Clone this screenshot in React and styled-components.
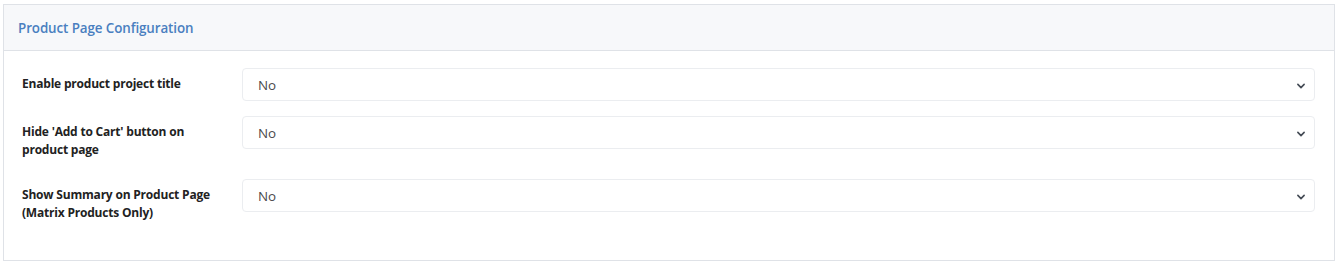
import React from "react";
import styled, { createGlobalStyle } from "styled-components";

const Global = createGlobalStyle`
  html, body { margin: 0; padding: 0; background: #ffffff; }
  body { font-family: "Open Sans", "Noto Sans", sans-serif; }
`;

const Page = styled.div`
  padding: 4px 5px 6px 3px;
`;

const Card = styled.section`
  border: 1px solid #dfe2e7;
  background: #ffffff;
`;

const Header = styled.header`
  height: 46px;
  box-sizing: border-box;
  display: flex;
  align-items: center;
  padding: 0 14px;
  background: #f7f8fa;
  border-bottom: 1px solid #dfe2e7;
`;

const Title = styled.h3`
  margin: 0;
  font-size: 13.4px;
  font-weight: 600;
  color: #4a7fc0;
  letter-spacing: -0.1px;
`;

const Body = styled.div`
  padding: 17px 19px 33px 18px;
  display: flex;
  flex-direction: column;
  gap: 15px;
`;

const Row = styled.div`
  display: grid;
  grid-template-columns: 220px 1fr;
  align-items: start;
`;

const Label = styled.label`
  padding: 7px 24px 5px 0;
  font-size: 12px;
  line-height: 18px;
  font-weight: 700;
  color: #222;
  letter-spacing: -0.2px;
`;

const SelectWrap = styled.div`
  position: relative;
`;

const Select = styled.select`
  width: 100%;
  height: 33px;
  appearance: none;
  -webkit-appearance: none;
  border: 1px solid #ebedf0;
  border-radius: 4px;
  background: #ffffff;
  padding: 0 30px 0 15px;
  font-family: "Open Sans", "Noto Sans", sans-serif;
  font-size: 13.4px;
  color: #4a4a4a;
  outline: none;
`;

const Chevron = styled.svg`
  position: absolute;
  right: 9px;
  top: 50%;
  width: 10px;
  height: 10px;
  margin-top: -4px;
  pointer-events: none;
`;

const fields = [
  "Enable product project title",
  "Hide 'Add to Cart' button on product page",
  "Show Summary on Product Page (Matrix Products Only)",
];

export default function App() {
  return (
    <Page>
      <Global />
      <Card>
        <Header>
          <Title>Product Page Configuration</Title>
        </Header>
        <Body>
          {fields.map((f) => (
            <Row key={f}>
              <Label>{f}</Label>
              <SelectWrap>
                <Select defaultValue="no">
                  <option value="no">No</option>
                  <option value="yes">Yes</option>
                </Select>
                <Chevron viewBox="0 0 16 16">
                  <path d="M3 5.5 L8 10.5 L13 5.5" fill="none" stroke="#444b55" strokeWidth="2.6" strokeLinecap="round" strokeLinejoin="round" />
                </Chevron>
              </SelectWrap>
            </Row>
          ))}
        </Body>
      </Card>
    </Page>
  );
}
